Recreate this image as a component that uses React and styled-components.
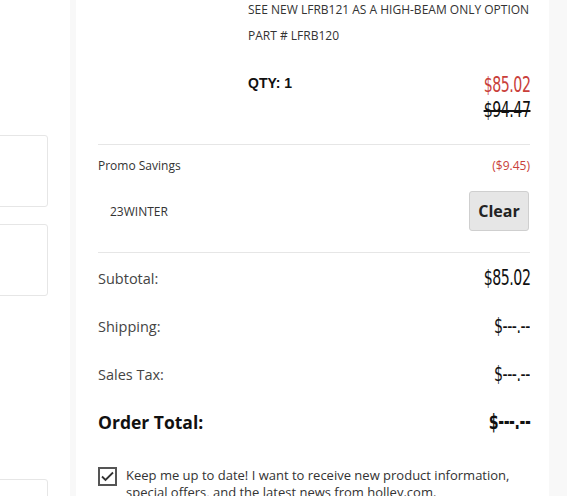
import styled, { createGlobalStyle } from "styled-components";

const GlobalStyle = createGlobalStyle`
  html, body {
    margin: 0;
    padding: 0;
    height: 496px;
    overflow: hidden;
    background: #f8f8f8;
  }
  body {
    font-family: "Open Sans", "Liberation Sans", sans-serif;
    color: #333;
  }
`;

const Page = styled.div`
  display: flex;
  height: 496px;
  background: #f8f8f8;
`;

const LeftColumn = styled.div`
  width: 70px;
  background: #fff;
  display: flex;
  flex-direction: column;
  overflow: hidden;
`;

const TopBar = styled.div`
  display: flex;
  height: 2px;
  width: 43px;
`;

const BarPart = styled.div`
  width: ${(p) => p.$w}px;
  background: ${(p) => p.$color};
`;

const FieldBox = styled.div`
  margin-left: -10px;
  width: 58px;
  height: ${(p) => p.$h}px;
  margin-top: ${(p) => p.$top}px;
  border: 1px solid #e6e6e6;
  border-radius: 3px;
  box-sizing: border-box;
  flex-shrink: 0;
`;

const Panel = styled.div`
  margin-left: 6px;
  width: 473px;
  background: #fff;
  padding: 0 19px 0 22px;
  box-sizing: border-box;
  margin-top: -3px;
`;

const ItemRow = styled.div`
  display: flex;
  padding-bottom: 21px;
  border-bottom: 1px solid #e6e6e6;
`;

const ImageCol = styled.div`
  width: 150px;
  flex-shrink: 0;
`;

const Details = styled.div`
  flex: 1;
`;

const DescLine = styled.div`
  font-size: 12px;
  line-height: 26px;
  text-transform: uppercase;
  color: #333;
`;

const QtyRow = styled.div`
  display: flex;
  justify-content: space-between;
  margin-top: 24px;
`;

const Qty = styled.div`
  font-family: "Liberation Sans", Arial, sans-serif;
  font-weight: bold;
  font-size: 14px;
  color: #111;
  line-height: 20px;
`;

const Prices = styled.div`
  display: flex;
  flex-direction: column;
  align-items: flex-end;
`;

const Price = styled.span`
  font-family: "DejaVu Sans Condensed", "Liberation Sans", sans-serif;
  font-size: 21px;
  font-weight: ${(p) => (p.$bold ? "bold" : "normal")};
  line-height: 25px;
  color: ${(p) => p.$color || "#111"};
  text-decoration: ${(p) => (p.$strike ? "line-through" : "none")};
  text-decoration-thickness: 1.5px;
  letter-spacing: -0.6px;
  display: inline-block;
  transform: scaleX(0.75);
  transform-origin: right center;
`;

const PromoBlock = styled.div`
  padding: 12px 0 21px;
  border-bottom: 1px solid #e6e6e6;
`;

const PromoHeader = styled.div`
  display: flex;
  justify-content: space-between;
  font-size: 12px;
  line-height: 18px;
`;

const RedSmall = styled.span`
  color: #c9403a;
`;

const CodeRow = styled.div`
  display: flex;
  justify-content: space-between;
  align-items: center;
  margin-top: 16px;
`;

const Code = styled.span`
  font-size: 12px;
  padding-left: 12px;
  color: #333;
`;

const ClearButton = styled.button`
  width: 60px;
  height: 40px;
  margin-right: 1px;
  background: #e6e6e6;
  border: 1px solid #cfcfcf;
  border-radius: 3px;
  font-family: "Open Sans", sans-serif;
  font-weight: bold;
  font-size: 16px;
  color: #222;
  padding: 0;
`;

const Totals = styled.div`
  padding-top: 1px;
`;

const TotalRow = styled.div`
  display: flex;
  justify-content: space-between;
  align-items: center;
  height: 48px;
`;

const TotalLabel = styled.span`
  font-size: ${(p) => (p.$big ? 17.5 : 14.5)}px;
  font-weight: ${(p) => (p.$big ? "bold" : "normal")};
  color: ${(p) => (p.$big ? "#111" : "#444")};
`;

const Subscribe = styled.label`
  display: flex;
  gap: 9px;
  margin-top: 21px;
  font-size: 13px;
  line-height: 17px;
  color: #333;
`;

const CheckBox = styled.span`
  width: 19px;
  height: 19px;
  border: 2px solid #555;
  box-sizing: border-box;
  flex-shrink: 0;
  display: flex;
  align-items: center;
  justify-content: center;
`;

export default function App() {
  return (
    <>
      <GlobalStyle />
      <Page>
        <LeftColumn>
          <TopBar>
            <BarPart $w={28} $color="#ddd" />
            <BarPart $w={15} $color="#3b6f8f" />
          </TopBar>
          <FieldBox $top={135} $h={72} />
          <FieldBox $top={17} $h={72} />
          <FieldBox $top={183} $h={40} />
        </LeftColumn>
        <Panel>
          <ItemRow>
            <ImageCol />
            <Details>
              <DescLine>See new LFRB121 as a high-beam only option</DescLine>
              <DescLine>Part # LFRB120</DescLine>
              <QtyRow>
                <Qty>QTY: 1</Qty>
                <Prices>
                  <Price $color="#c9403a">$85.02</Price>
                  <Price $strike>$94.47</Price>
                </Prices>
              </QtyRow>
            </Details>
          </ItemRow>
          <PromoBlock>
            <PromoHeader>
              <span>Promo Savings</span>
              <RedSmall>($9.45)</RedSmall>
            </PromoHeader>
            <CodeRow>
              <Code>23WINTER</Code>
              <ClearButton>Clear</ClearButton>
            </CodeRow>
          </PromoBlock>
          <Totals>
            <TotalRow>
              <TotalLabel>Subtotal:</TotalLabel>
              <Price>$85.02</Price>
            </TotalRow>
            <TotalRow>
              <TotalLabel>Shipping:</TotalLabel>
              <Price>$---.--</Price>
            </TotalRow>
            <TotalRow>
              <TotalLabel>Sales Tax:</TotalLabel>
              <Price>$---.--</Price>
            </TotalRow>
            <TotalRow>
              <TotalLabel $big>Order Total:</TotalLabel>
              <Price $bold>$---.--</Price>
            </TotalRow>
          </Totals>
          <Subscribe>
            <CheckBox>
              <svg width="13" height="11" viewBox="0 0 13 11">
                <polyline points="1,5.5 4.5,9 12,1.5" fill="none" stroke="#333" strokeWidth="1.8" />
              </svg>
            </CheckBox>
            <span>
              Keep me up to date! I want to receive new product information,
              special offers, and the latest news from holley.com.
            </span>
          </Subscribe>
        </Panel>
      </Page>
    </>
  );
}
